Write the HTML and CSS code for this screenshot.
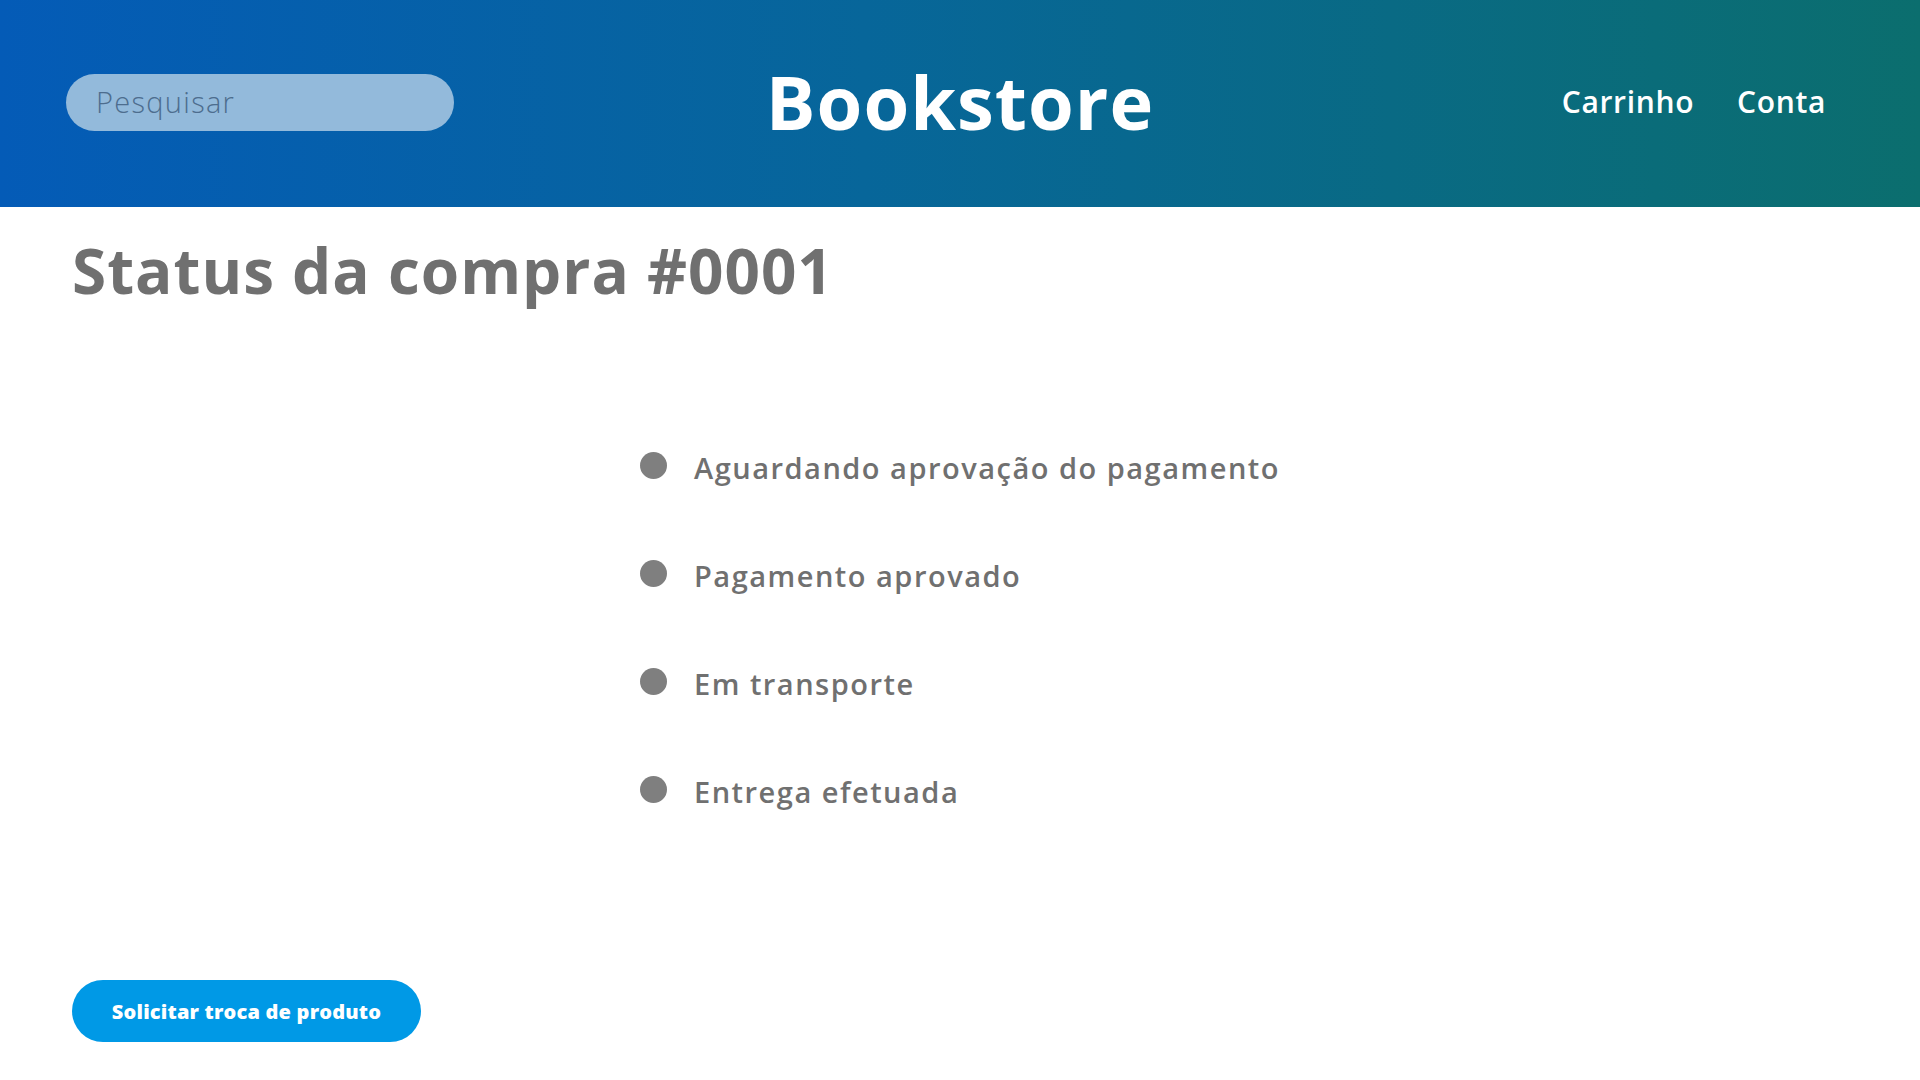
FILE: index.html
```html
<!DOCTYPE html>
<html lang="pt-BR">
<head>
<meta charset="utf-8">
<title>Bookstore - Status da compra</title>
<link rel="stylesheet" href="styles.css">
</head>
<body>
<header class="topbar">
  <div class="search-wrap">
    <input class="search" type="text" placeholder="Pesquisar">
  </div>
  <h1 class="brand">Bookstore</h1>
  <nav class="nav">
    <a href="#" class="nav-link">Carrinho</a>
    <a href="#" class="nav-link">Conta</a>
  </nav>
</header>
<main class="content">
  <h2 class="page-title">Status da compra #0001</h2>
  <div class="status-area">
    <ul class="status-list">
      <li class="status-item"><span class="dot"></span><span class="label">Aguardando aprovação do pagamento</span></li>
      <li class="status-item"><span class="dot"></span><span class="label">Pagamento aprovado</span></li>
      <li class="status-item"><span class="dot"></span><span class="label">Em transporte</span></li>
      <li class="status-item"><span class="dot"></span><span class="label">Entrega efetuada</span></li>
    </ul>
  </div>
  <div class="actions">
    <button class="btn-primary" type="button">Solicitar troca de produto</button>
  </div>
</main>
</body>
</html>
```
FILE: styles.css
```css
* { box-sizing: border-box; }
html, body { margin: 0; padding: 0; }
body {
  font-family: "Open Sans", "Noto Sans", sans-serif;
  background: #ffffff;
  width: 1920px;
  height: 1080px;
  overflow: hidden;
}
.topbar {
  height: 207px;
  background: linear-gradient(90deg, #045bb7 0%, #07669a 45%, #0b6e6e 100%);
  display: grid;
  grid-template-columns: 1fr auto 1fr;
  align-items: center;
  padding: 0 66px 5px 66px;
}
.search-wrap { display: flex; }
.search {
  width: 388px;
  height: 57px;
  border: none;
  border-radius: 29px;
  background: #93badb;
  padding: 0 0 2px 30px;
  font-family: "Open Sans", sans-serif;
  font-weight: 300;
  font-size: 29px;
  letter-spacing: 1.3px;
  color: #4d6d8e;
  outline: none;
  margin-top: 2px;
}
.search::placeholder { color: #4d6d8e; opacity: 1; }
.brand {
  margin: 0;
  color: #ffffff;
  font-family: "Open Sans", sans-serif;
  font-weight: 700;
  font-size: 74px;
  letter-spacing: 1px;
  line-height: 1;
  padding-top: 2px;
}
.nav {
  display: flex;
  justify-content: flex-end;
  gap: 43px;
  padding-right: 28px;
}
.nav-link {
  color: #ffffff;
  text-decoration: none;
  font-weight: 600;
  font-size: 30px;
  letter-spacing: 0.65px;
}
.content {
  padding: 0 0 0 72px;
  display: flex;
  flex-direction: column;
}
.page-title {
  margin: 22px 0 0 0;
  color: #707070;
  font-weight: 700;
  font-size: 62px;
  line-height: 82px;
  letter-spacing: 1px;
}
.status-area {
  display: flex;
  justify-content: center;
  margin: 137px 0 0 -72px;
}
.status-list {
  list-style: none;
  margin: 0;
  padding: 0;
  display: flex;
  flex-direction: column;
  gap: 70px;
}
.status-item {
  display: flex;
  align-items: center;
  gap: 27px;
  height: 38px;
}
.dot {
  width: 27px;
  height: 27px;
  border-radius: 50%;
  background: #7f7f7f;
  flex: none;
  margin-top: -4px;
}
.label {
  color: #707070;
  font-weight: 600;
  font-size: 29px;
  letter-spacing: 1.5px;
}
.actions {
  margin-top: 170px;
}
.btn-primary {
  width: 349px;
  height: 62px;
  border: none;
  border-radius: 31px;
  background: #0099e6;
  color: #ffffff;
  font-family: "Open Sans", sans-serif;
  font-weight: 800;
  font-size: 20px;
  letter-spacing: 0.2px;
  cursor: pointer;
}
```
